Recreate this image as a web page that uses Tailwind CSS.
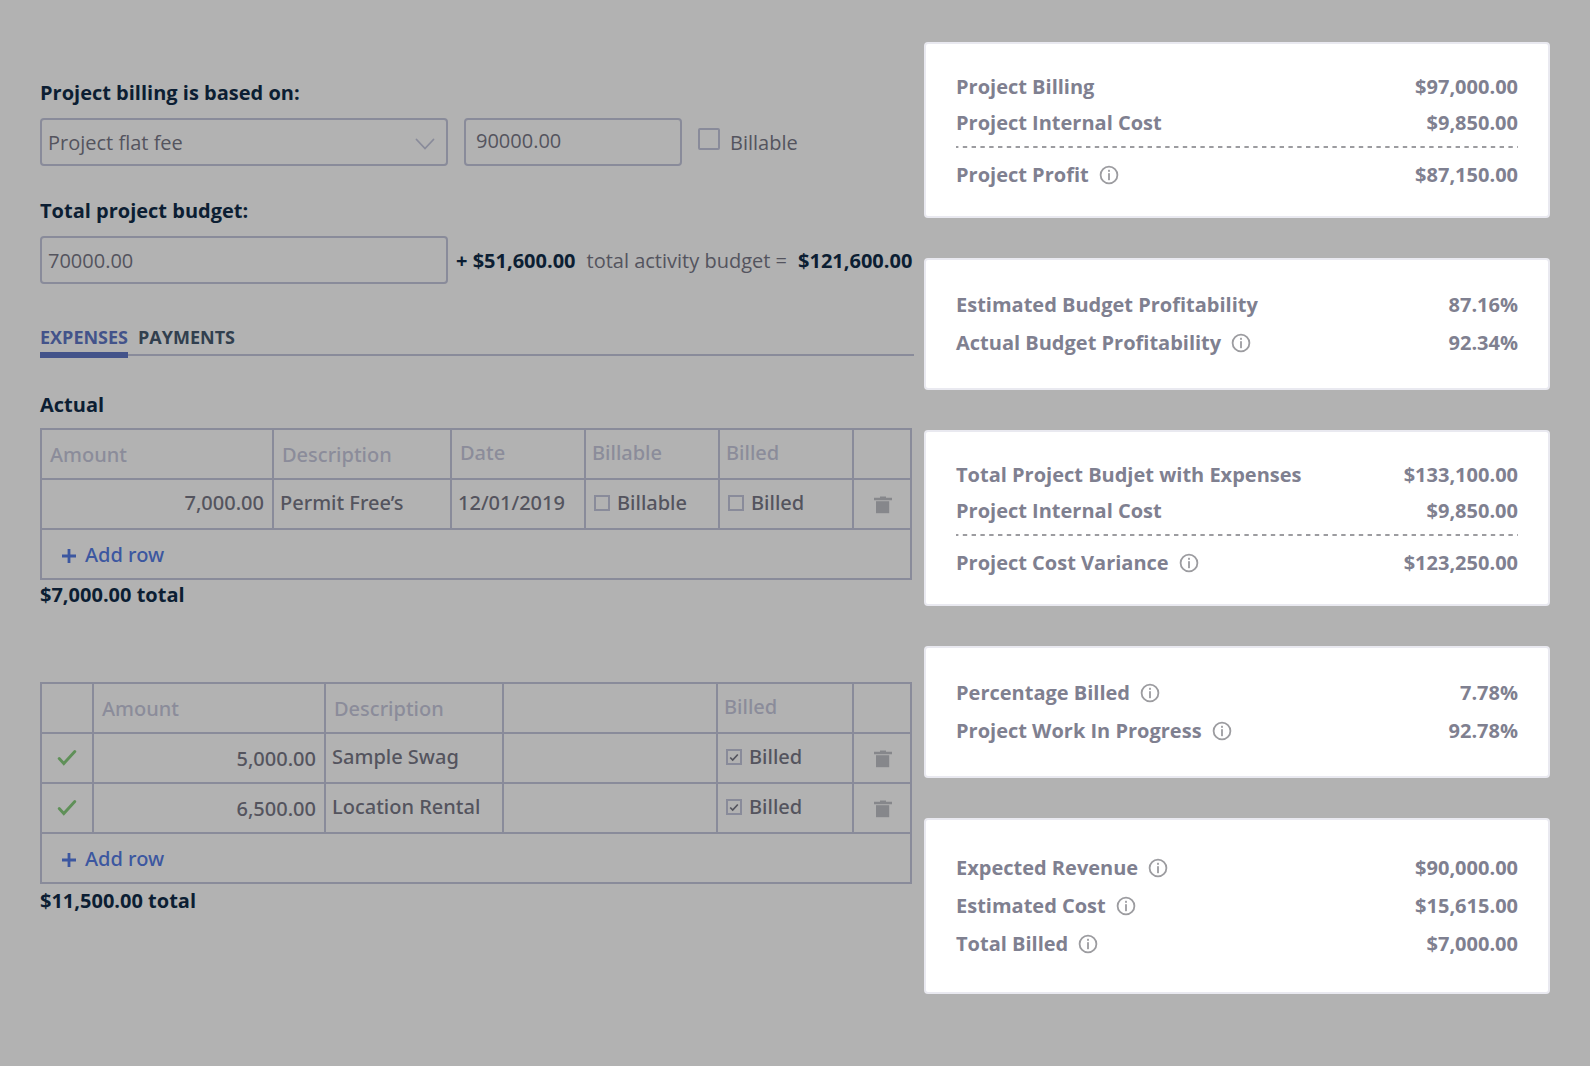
<!DOCTYPE html>
<html lang="en">
<head>
    <meta charset="UTF-8">
    <meta name="viewport" content="width=device-width, initial-scale=1.0">
    <title>Project Billing</title>
    <script src="https://cdn.jsdelivr.net/npm/@tailwindcss/browser@4"></script>
</head>
<body class="bg-[#b2b2b2] font-['Open_Sans',sans-serif] text-[20px] leading-[30px] text-[#54545e]">
    <!-- Shared icons -->
    <svg class="hidden">
        <symbol id="info" viewBox="0 0 20 20">
            <circle cx="10" cy="10" r="8.4" fill="none" stroke="#9c9ca0" stroke-width="1.8"/>
            <rect x="9.1" y="4.8" width="1.8" height="2" fill="#9c9ca0"/>
            <rect x="9.1" y="8.2" width="1.8" height="7" fill="#9c9ca0"/>
        </symbol>
        <symbol id="trash" viewBox="0 0 18 18">
            <path d="M6 .5h6v1.2h6v2.500H0V1.700h6z" fill="#86878b"/>
            <path d="M2 5.200h13.200v12H2z" fill="#86878b"/>
        </symbol>
        <symbol id="plus" viewBox="0 0 14 14">
            <path d="M7 0v14M0 7h14" stroke="#3c57a0" stroke-width="2.800"/>
        </symbol>
        <symbol id="check" viewBox="0 0 20 18">
            <path d="M2.200 9.500l4.600 5L17.800 2.500" fill="none" stroke="#5f9058" stroke-width="2.900" stroke-linecap="round"/>
        </symbol>
    </svg>

    <div class="grid grid-cols-[874fr_626fr] gap-[10px] px-10 pt-[42px]">
        <main class="pt-9">
            <!-- Billing -->
            <label for="billing" class="block font-bold text-[#0c1e33]">Project billing is based on:</label>
            <div class="flex items-center gap-4 mt-2.5">
                <div class="relative w-[408px]">
                    <select id="billing" class="appearance-none block w-full h-12 border-2 border-[#898b9a] rounded pl-1.5 pr-10 pt-0.5">
                        <option>Project flat fee</option>
                    </select>
                    <svg class="absolute right-[13px] top-5 w-5 h-3 pointer-events-none" viewBox="0 0 20 12"><path d="M1.500 1.500L10 10.500l8.500-9" fill="none" stroke="#898b9a" stroke-width="1.800" stroke-linecap="round"/></svg>
                </div>
                <input type="text" aria-label="Flat fee" value="90000.00" class="w-[218px] h-12 border-2 border-[#898b9a] rounded px-2.5 pb-1">
                <div class="flex items-center gap-2.5">
                    <input type="checkbox" id="fee-billable" class="appearance-none w-[22px] h-[22px] mb-1.5 border-2 border-[#898b9a] rounded-xs">
                    <label for="fee-billable" class="pt-0.5">Billable</label>
                </div>
            </div>

            <!-- Budget -->
            <label for="budget" class="block mt-[30px] font-bold text-[#0c1e33]">Total project budget:</label>
            <div class="flex items-center gap-2 mt-2.5 whitespace-nowrap">
                <input type="text" id="budget" value="70000.00" class="w-[408px] h-12 border-2 border-[#898b9a] rounded px-1.5">
                <p class="flex gap-[11px] pt-0.5">
                    <b class="text-[#0c1e33]">+ $51,600.00</b>
                    <span>total activity budget =</span>
                    <b class="text-[#0c1e33]">$121,600.00</b>
                </p>
            </div>

            <!-- Tabs -->
            <nav class="relative flex gap-2.5 mt-10 text-[18px] leading-[26px] font-bold">
                <span class="absolute inset-x-0 bottom-0.5 h-0.5 bg-[#898b9a]"></span>
                <button class="relative pb-0.5 border-b-6 border-[#43538a] text-[#43538a]">EXPENSES</button>
                <button class="pb-0.5 border-b-6 border-transparent text-[#313f4e]">PAYMENTS</button>
            </nav>

            <section class="mt-8 pr-0.5">
                <h2 class="font-bold text-[#0c1e33]">Actual</h2>
                <table class="table-fixed border-collapse w-full mt-2 font-['Noto_Sans',sans-serif] font-medium">
                    <colgroup>
                        <col class="w-[232px]"><col><col class="w-[134px]"><col class="w-[134px]"><col class="w-[134px]"><col class="w-[58px]">
                    </colgroup>
                    <thead>
                        <tr class="h-[50px] text-left text-[#8b8c9a]">
                            <th class="border-2 border-[#898b9a] px-2 pt-0.5 font-medium">Amount</th>
                            <th class="border-2 border-[#898b9a] px-2 pt-0.5 font-medium">Description</th>
                            <th class="border-2 border-[#898b9a] px-2 pb-0.5 font-medium">Date</th>
                            <th class="border-2 border-[#898b9a] px-1.5 pb-0.5 font-medium">Billable</th>
                            <th class="border-2 border-[#898b9a] px-1.5 pb-0.5 font-medium">Billed</th>
                            <td class="border-2 border-[#898b9a]"></td>
                        </tr>
                    </thead>
                    <tbody>
                        <tr class="h-[50px]">
                            <td class="border-2 border-[#898b9a] px-2 pb-0.5 text-right">7,000.00</td>
                            <td class="border-2 border-[#898b9a] px-1.5 pb-0.5">Permit Free’s</td>
                            <td class="border-2 border-[#898b9a] px-1.5 pb-0.5">12/01/2019</td>
                            <td class="border-2 border-[#898b9a] px-2 pb-0.5">
                                <label class="flex items-center gap-[7px]"><input type="checkbox" class="appearance-none w-4 h-4 border-2 border-[#898b9a]">Billable</label>
                            </td>
                            <td class="border-2 border-[#898b9a] px-2 pb-0.5">
                                <label class="flex items-center gap-[7px]"><input type="checkbox" class="appearance-none w-4 h-4 border-2 border-[#898b9a]">Billed</label>
                            </td>
                            <td class="border-2 border-[#898b9a] pl-0.5 pt-0.5">
                                <button aria-label="Delete" class="block mx-auto"><svg class="w-[18px] h-[18px]"><use href="#trash"/></svg></button>
                            </td>
                        </tr>
                        <tr class="h-[50px]">
                            <td colspan="6" class="border-2 border-[#898b9a] px-5 pt-0.5 text-[#3c57a0]">
                                <button class="flex items-center gap-[9px]"><svg class="w-3.5 h-3.5 mt-0.5"><use href="#plus"/></svg>Add row</button>
                            </td>
                        </tr>
                    </tbody>
                </table>
                <p class="font-bold text-[#0c1e33]">$7,000.00 total</p>
            </section>

            <section class="mt-[72px] pr-0.5">
                <table class="table-fixed border-collapse w-full font-['Noto_Sans',sans-serif] font-medium">
                    <colgroup>
                        <col class="w-[52px]"><col class="w-[232px]"><col class="w-[178px]"><col><col class="w-[136px]"><col class="w-[58px]">
                    </colgroup>
                    <thead>
                        <tr class="h-[50px] text-left text-[#8b8c9a]">
                            <td class="border-2 border-[#898b9a]"></td>
                            <th class="border-2 border-[#898b9a] px-2 pt-0.5 font-medium">Amount</th>
                            <th class="border-2 border-[#898b9a] px-2 pt-0.5 font-medium">Description</th>
                            <td class="border-2 border-[#898b9a]"></td>
                            <th class="border-2 border-[#898b9a] px-1.5 pb-0.5 font-medium">Billed</th>
                            <td class="border-2 border-[#898b9a]"></td>
                        </tr>
                    </thead>
                    <tbody>
                        <tr class="h-[50px]">
                            <td class="border-2 border-[#898b9a]"><svg class="block mx-auto w-5 h-[18px]"><use href="#check"/></svg></td>
                            <td class="border-2 border-[#898b9a] px-2 pt-0.5 text-right">5,000.00</td>
                            <td class="border-2 border-[#898b9a] px-1.5 pb-0.5">Sample Swag</td>
                            <td class="border-2 border-[#898b9a]"></td>
                            <td class="border-2 border-[#898b9a] px-2 pb-0.5">
                                <label class="flex items-center gap-[7px]">
                                    <span class="relative">
                                        <input type="checkbox" checked class="appearance-none block w-4 h-4 border-2 border-[#898b9a]">
                                        <svg class="absolute inset-0 w-4 h-4" viewBox="0 0 16 16"><path d="M4.200 8.500l2.500 2.500L11.800 5.500" fill="none" stroke="#54545e" stroke-width="1.700"/></svg>
                                    </span>Billed
                                </label>
                            </td>
                            <td class="border-2 border-[#898b9a] pl-0.5 pt-0.5">
                                <button aria-label="Delete" class="block mx-auto"><svg class="w-[18px] h-[18px]"><use href="#trash"/></svg></button>
                            </td>
                        </tr>
                        <tr class="h-[50px]">
                            <td class="border-2 border-[#898b9a]"><svg class="block mx-auto w-5 h-[18px]"><use href="#check"/></svg></td>
                            <td class="border-2 border-[#898b9a] px-2 pt-0.5 text-right">6,500.00</td>
                            <td class="border-2 border-[#898b9a] px-1.5 pb-0.5">Location Rental</td>
                            <td class="border-2 border-[#898b9a]"></td>
                            <td class="border-2 border-[#898b9a] px-2 pb-0.5">
                                <label class="flex items-center gap-[7px]">
                                    <span class="relative">
                                        <input type="checkbox" checked class="appearance-none block w-4 h-4 border-2 border-[#898b9a]">
                                        <svg class="absolute inset-0 w-4 h-4" viewBox="0 0 16 16"><path d="M4.200 8.500l2.500 2.500L11.800 5.500" fill="none" stroke="#54545e" stroke-width="1.700"/></svg>
                                    </span>Billed
                                </label>
                            </td>
                            <td class="border-2 border-[#898b9a] pl-0.5 pt-0.5">
                                <button aria-label="Delete" class="block mx-auto"><svg class="w-[18px] h-[18px]"><use href="#trash"/></svg></button>
                            </td>
                        </tr>
                        <tr class="h-[50px]">
                            <td colspan="6" class="border-2 border-[#898b9a] px-5 pt-0.5 text-[#3c57a0]">
                                <button class="flex items-center gap-[9px]"><svg class="w-3.5 h-3.5 mt-0.5"><use href="#plus"/></svg>Add row</button>
                            </td>
                        </tr>
                    </tbody>
                </table>
                <p class="mt-0.5 font-bold text-[#0c1e33]">$11,500.00 total</p>
            </section>
        </main>

        <!-- Summary cards -->
        <aside class="flex flex-col gap-10 font-bold text-[#7f8090]">
            <section class="bg-white border-2 border-[#e9e9f0] rounded px-[30px] pt-[25px] pb-[22px]">
                <div class="flex justify-between leading-[36px]"><span>Project Billing</span><span>$97,000.00</span></div>
                <div class="flex justify-between leading-[36px]"><span>Project Internal Cost</span><span>$9,850.00</span></div>
                <svg class="block w-full h-0.5 mt-[5px] mb-2"><line x1="-2" y1="1" x2="100%" y2="1" stroke="#9c9ca0" stroke-width="2" stroke-dasharray="4.400"/></svg>
                <div class="flex justify-between leading-[38px]">
                    <span class="flex items-center gap-2.5">Project Profit <svg class="w-5 h-5"><use href="#info"/></svg></span><span>$87,150.00</span>
                </div>
            </section>

            <section class="bg-white border-2 border-[#e9e9f0] rounded px-[30px] py-[26px]">
                <div class="flex justify-between leading-[38px]"><span>Estimated Budget Profitability</span><span>87.16%</span></div>
                <div class="flex justify-between leading-[38px]">
                    <span class="flex items-center gap-2.5">Actual Budget Profitability <svg class="w-5 h-5"><use href="#info"/></svg></span><span>92.34%</span>
                </div>
            </section>

            <section class="bg-white border-2 border-[#e9e9f0] rounded px-[30px] pt-[25px] pb-[22px]">
                <div class="flex justify-between leading-[36px]"><span>Total Project Budjet with Expenses</span><span>$133,100.00</span></div>
                <div class="flex justify-between leading-[36px]"><span>Project Internal Cost</span><span>$9,850.00</span></div>
                <svg class="block w-full h-0.5 mt-[5px] mb-2"><line x1="-2" y1="1" x2="100%" y2="1" stroke="#9c9ca0" stroke-width="2" stroke-dasharray="4.400"/></svg>
                <div class="flex justify-between leading-[38px]">
                    <span class="flex items-center gap-2.5">Project Cost Variance <svg class="w-5 h-5"><use href="#info"/></svg></span><span>$123,250.00</span>
                </div>
            </section>

            <section class="bg-white border-2 border-[#e9e9f0] rounded px-[30px] py-[26px]">
                <div class="flex justify-between leading-[38px]">
                    <span class="flex items-center gap-2.5">Percentage Billed <svg class="w-5 h-5"><use href="#info"/></svg></span><span>7.78%</span>
                </div>
                <div class="flex justify-between leading-[38px]">
                    <span class="flex items-center gap-2.5">Project Work In Progress <svg class="w-5 h-5"><use href="#info"/></svg></span><span>92.78%</span>
                </div>
            </section>

            <section class="bg-white border-2 border-[#e9e9f0] rounded px-[30px] py-[29px]">
                <div class="flex justify-between leading-[38px]">
                    <span class="flex items-center gap-2.5">Expected Revenue <svg class="w-5 h-5"><use href="#info"/></svg></span><span>$90,000.00</span>
                </div>
                <div class="flex justify-between leading-[38px]">
                    <span class="flex items-center gap-2.5">Estimated Cost <svg class="w-5 h-5"><use href="#info"/></svg></span><span>$15,615.00</span>
                </div>
                <div class="flex justify-between leading-[38px]">
                    <span class="flex items-center gap-2.5">Total Billed <svg class="w-5 h-5"><use href="#info"/></svg></span><span>$7,000.00</span>
                </div>
            </section>
        </aside>
    </div>
</body>
</html>
